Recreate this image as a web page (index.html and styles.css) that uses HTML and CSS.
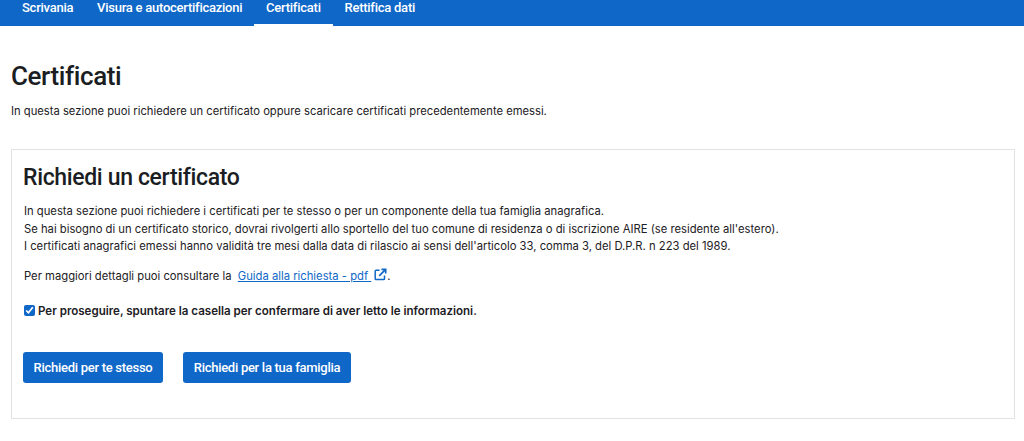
FILE: index.html
```html
<!DOCTYPE html>
<html lang="it">
<head>
<meta charset="utf-8">
<title>Certificati</title>
<link rel="stylesheet" href="styles.css">
</head>
<body>
<nav class="topnav">
  <a class="tab" href="#">Scrivania</a>
  <a class="tab" href="#">Visura e autocertificazioni</a>
  <a class="tab active" href="#">Certificati</a>
  <a class="tab" href="#">Rettifica dati</a>
</nav>
<main class="content">
  <h1 class="title">Certificati</h1>
  <p class="lead">In questa sezione puoi richiedere un certificato oppure scaricare certificati precedentemente emessi.</p>
  <section class="card">
    <h2 class="card-title">Richiedi un certificato</h2>
    <p class="info">In questa sezione puoi richiedere i certificati per te stesso o per un componente della tua famiglia anagrafica.<br>Se hai bisogno di un certificato storico, dovrai rivolgerti allo sportello del tuo comune di residenza o di iscrizione AIRE (se residente all'estero).<br>I certificati anagrafici emessi hanno validità tre mesi dalla data di rilascio ai sensi dell'articolo 33, comma 3, del D.P.R. n 223 del 1989.</p>
    <p class="guide">Per maggiori dettagli puoi consultare la <a class="link" href="#">Guida alla richiesta - pdf </a><svg class="ext" viewBox="0 0 14 14" width="13" height="13" aria-hidden="true"><path d="M6 2.5H2.2a.9.9 0 0 0-.9.9v8.2c0 .5.4.9.9.9h8.2c.5 0 .9-.4.9-.9V8" fill="none" stroke="#0f67c8" stroke-width="1.6"/><path d="M5.6 8.4 12 2M8 1.4h4.6v4.6" fill="none" stroke="#0f67c8" stroke-width="1.8"/></svg>.</p>
    <label class="confirm"><input class="check" type="checkbox" checked> Per proseguire, spuntare la casella per confermare di aver letto le informazioni.</label>
    <div class="actions">
      <button class="btn" type="button">Richiedi per te stesso</button>
      <button class="btn" type="button">Richiedi per la tua famiglia</button>
    </div>
  </section>
</main>
</body>
</html>
```
FILE: styles.css
```css
* { box-sizing: border-box; }
html, body { margin: 0; background: #fff; }
body { font-family: Inter, "Liberation Sans", sans-serif; color: #1c2024; height: 441px; overflow: hidden; font-variant-ligatures: none; }
.topnav { display: flex; height: 26px; background: #0f67c8; padding-left: 10px; }
.tab { display: block; padding: 0 11.8px 0 12px; height: 26px; line-height: 15px; font-family: Roboto, sans-serif; font-weight: 500; font-size: 13px; letter-spacing: -0.25px; color: #fff; text-decoration: none; }
.tab.active { border-bottom: 2px solid #fff; }
.content { padding: 34px 9px 0 11px; }
.title { margin: 0; font-family: Roboto, sans-serif; font-weight: 500; font-size: 26px; letter-spacing: -0.4px; line-height: 32px; color: #1a1d21; }
.lead { margin: 10px 0 0; font-size: 11.22px; line-height: 18px; }
.card { margin-top: 29px; height: 270px; border: 1px solid #e2e2e2; padding: 13px 11px 0; }
.card-title { margin: 0; font-family: Roboto, sans-serif; font-weight: 500; font-size: 23px; letter-spacing: -0.35px; line-height: 30px; color: #1a1d21; }
.info { margin: 10px 0 0 1px; font-size: 11.25px; line-height: 17.5px; }
.guide { margin: 11px 0 0 1px; font-size: 11.25px; line-height: 18px; display: flex; align-items: center; white-space: pre; }
.link { color: #0f67c8; text-decoration: underline; margin-left: 3px; }
.ext { margin: -2px 0 0 3px; }
.confirm { display: flex; align-items: center; gap: 3px; margin: 17px 0 0 1px; font-size: 11.55px; line-height: 18px; font-weight: 600; }
.check { width: 11px; height: 11px; margin: 0; accent-color: #0f67c8; }
.actions { display: flex; gap: 20px; margin-top: 32px; }
.btn { width: 140px; height: 31px; padding: 0; border: 0; border-radius: 3px; background: #0f67c8; color: #fff; font-family: Roboto, sans-serif; font-weight: 500; font-size: 13px; letter-spacing: -0.28px; }
.btn + .btn { width: 168px; }
```
